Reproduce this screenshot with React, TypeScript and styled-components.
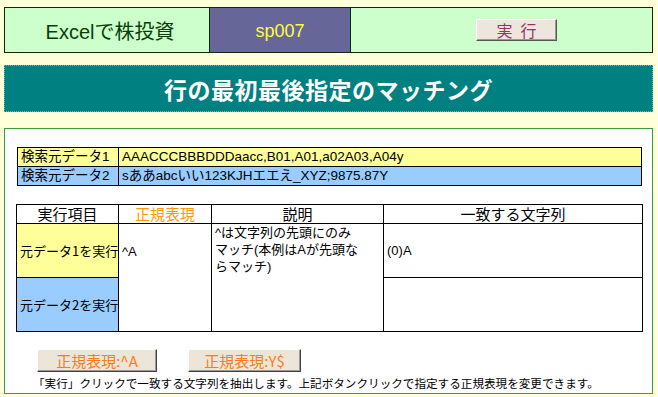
import styled, { createGlobalStyle } from "styled-components";

const Global = createGlobalStyle`
  html, body {
    margin: 0;
    padding: 0;
    background: #ffffd9;
  }
  body {
    font-family: "Liberation Sans", "Noto Sans CJK JP", sans-serif;
    color: #000;
  }
`

const Page = styled.div`
  width: 658px;
  height: 397px;
  padding: 7px 5px 0 4px;
  box-sizing: border-box;
  display: flex;
  flex-direction: column;
`

const TopBar = styled.div`
  display: grid;
  grid-template-columns: 205px 141px 1fr;
  height: 46px;
  border: 1px solid #0b2a0b;
  box-sizing: border-box;
  background: #ccffcc;
`

const TopCell = styled.div<{ $bg?: string; $divider?: boolean }>`
  display: flex;
  align-items: center;
  justify-content: center;
  background: ${p => p.$bg || "transparent"};
  border-right: ${p => (p.$divider ? "1px solid #0b2a0b" : "0")};
`

const Brand = styled.span`
  font-size: 20px;
  color: #0a3d0a;
  padding-left: 6px;
`

const Code = styled.span`
  font-size: 18px;
  color: #ffff33;
  padding-top: 2px;
`

const RunButton = styled.button`
  width: 81px;
  height: 22px;
  margin-left: 30px;
  background: #ece6dc;
  border: 1px solid;
  border-color: #fff #555 #555 #fff;
  box-shadow: inset -1px -1px 0 #999;
  color: #993366;
  font-family: "Noto Sans CJK JP", sans-serif;
  font-size: 16px;
  letter-spacing: 8px;
  padding: 0 0 0 8px;
  line-height: 20px;
  cursor: pointer;
`

const TitleBand = styled.div`
  margin-top: 12px;
  height: 47px;
  background: #008080;
  border: 1px dotted #4fc9a0;
  box-sizing: border-box;
  display: flex;
  align-items: center;
  justify-content: center;
`

const Title = styled.h1`
  margin: 0;
  font-family: "Noto Sans CJK JP", sans-serif;
  font-weight: 700;
  font-size: 23px;
  letter-spacing: 0.5px;
  color: #fff;
`

const Panel = styled.div`
  margin-top: 16px;
  height: 266px;
  border: 1px solid #3c9a3c;
  box-sizing: border-box;
  background: #fff;
  padding: 18px 10px 0 12px;
  display: flex;
  flex-direction: column;
`

const DataTable = styled.div`
  display: grid;
  grid-template-columns: 101px 1fr;
  border: 1px solid #000;
`

const DataCell = styled.div<{ $bg: string; $first?: boolean; $top?: boolean }>`
  background: ${p => p.$bg};
  height: 18px;
  line-height: 18px;
  font-size: 13.5px;
  padding-left: 3px;
  white-space: nowrap;
  overflow: hidden;
  border-right: ${p => (p.$first ? "1px solid #000" : "0")};
  border-top: ${p => (p.$top ? "0" : "1px solid #000")};
  font-family: "Liberation Sans", "Noto Sans CJK JP", sans-serif;
`

const Grid = styled.table`
  margin-top: 18px;
  margin-left: -1px;
  border-collapse: collapse;
  width: 627px;
  table-layout: fixed;
  font-family: "Liberation Sans", "Noto Sans CJK JP", sans-serif;
  td, th {
    border: 1px solid #000;
    padding: 0 3px;
  }
`

const Head = styled.th<{ $orange?: boolean }>`
  height: 18px;
  font-size: 15px;
  font-weight: 400;
  line-height: 18px;
  text-align: center;
  color: ${p => (p.$orange ? "#ff9900" : "#000")};
  font-family: "Noto Sans CJK JP", sans-serif;
`

const RowLabel = styled.td<{ $bg: string }>`
  height: 53px;
  background: ${p => p.$bg};
  font-size: 13px;
  white-space: nowrap;
  font-family: "Noto Sans CJK JP", sans-serif;
`

const Cell = styled.td<{ $top?: boolean; $offset?: number }>`
  font-size: 13px;
  vertical-align: ${p => (p.$top ? "top" : "middle")};
  padding-top: ${p => p.$offset || 0}px !important;
  line-height: 17px;
  white-space: nowrap;
  font-family: "Liberation Sans", "Noto Sans CJK JP", sans-serif;
`

const ButtonRow = styled.div`
  display: flex;
  gap: 31px;
  margin-top: 17px;
  padding-left: 20px;
`

const PatternButton = styled.button<{ $w: number }>`
  width: ${p => p.$w}px;
  height: 23px;
  background: #ece6d8;
  border: 1px solid;
  border-color: #fff #404040 #404040 #fff;
  box-shadow: inset -1px -1px 0 #9a9a9a;
  color: #ff7a1a;
  font-family: "Noto Sans CJK JP", sans-serif;
  font-size: 15px;
  padding: 0;
  cursor: pointer;
`

const Note = styled.p`
  margin: 4px 0 0 16px;
  font-family: "Noto Sans CJK JP", sans-serif;
  font-size: 11.6px;
  line-height: 14px;
  white-space: nowrap;
`

const rows = [
  { label: "検索元データ1", value: "AAACCCBBBDDDaacc,B01,A01,a02A03,A04y", bg: "#ffff99" },
  { label: "検索元データ2", value: "sああabcいい123KJHエエえ_XYZ;9875.87Y", bg: "#99ccff" },
]

export default function App() {
  return (
    <>
      <Global />
      <Page>
        <TopBar>
          <TopCell $divider>
            <Brand>Excelで株投資</Brand>
          </TopCell>
          <TopCell $divider $bg="#666699">
            <Code>sp007</Code>
          </TopCell>
          <TopCell>
            <RunButton>実行</RunButton>
          </TopCell>
        </TopBar>

        <TitleBand>
          <Title>行の最初最後指定のマッチング</Title>
        </TitleBand>

        <Panel>
          <DataTable>
            {rows.map((r, i) => [
              <DataCell key={r.label} $bg={r.bg} $first $top={i === 0}>{r.label}</DataCell>,
              <DataCell key={r.value} $bg={r.bg} $top={i === 0}>{r.value}</DataCell>,
            ])}
          </DataTable>

          <Grid>
            <colgroup>
              <col style={{ width: 102 }} />
              <col style={{ width: 93 }} />
              <col style={{ width: 172 }} />
              <col />
            </colgroup>
            <thead>
              <tr>
                <Head>実行項目</Head>
                <Head $orange>正規表現</Head>
                <Head>説明</Head>
                <Head>一致する文字列</Head>
              </tr>
            </thead>
            <tbody>
              <tr>
                <RowLabel $bg="#ffff99">元データ1を実行</RowLabel>
                <Cell rowSpan={2} $top $offset={19}>^A</Cell>
                <Cell rowSpan={2} $top>
                  ^は文字列の先頭にのみ<br />
                  マッチ(本例はAが先頭な<br />
                  らマッチ)
                </Cell>
                <Cell>(0)A</Cell>
              </tr>
              <tr>
                <RowLabel $bg="#99ccff">元データ2を実行</RowLabel>
                <Cell />
              </tr>
            </tbody>
          </Grid>

          <ButtonRow>
            <PatternButton $w={120}>正規表現:^A</PatternButton>
            <PatternButton $w={113}>正規表現:Y$</PatternButton>
          </ButtonRow>
          <Note>「実行」クリックで一致する文字列を抽出します。上記ボタンクリックで指定する正規表現を変更できます。</Note>
        </Panel>
      </Page>
    </>
  )
}
